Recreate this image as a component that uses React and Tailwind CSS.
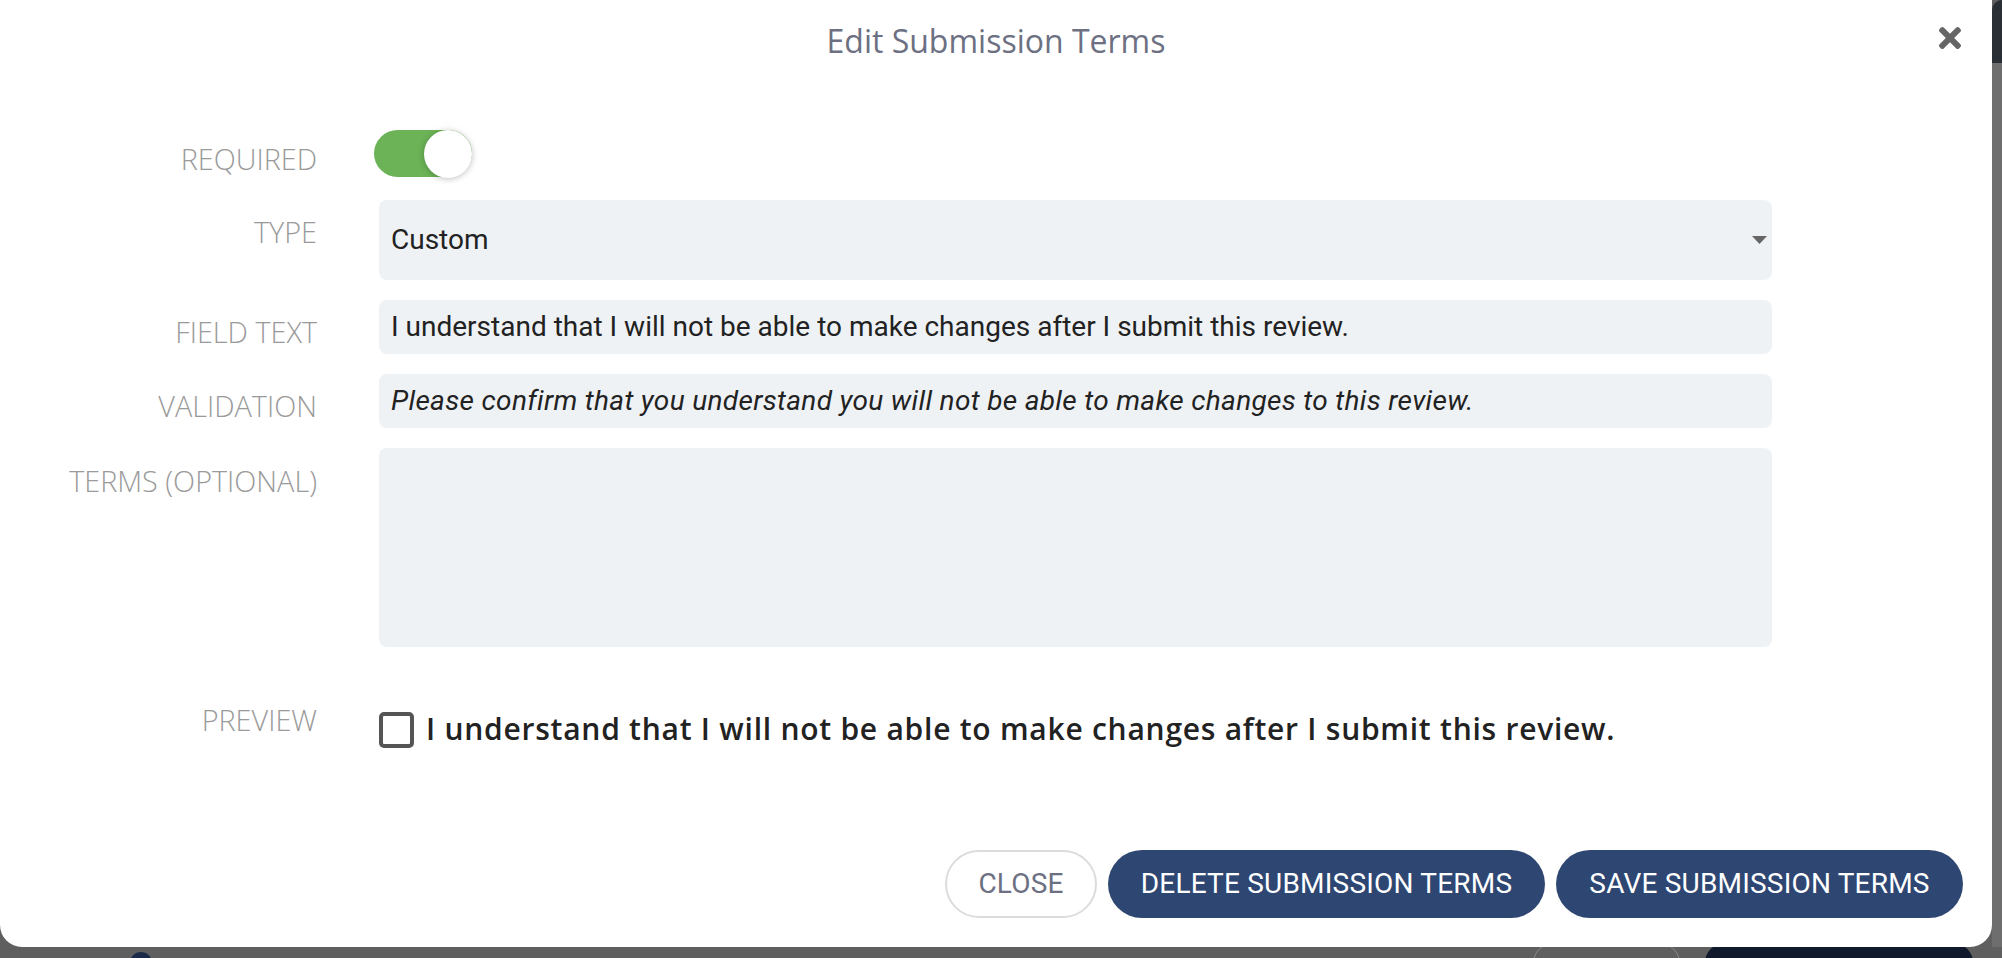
import { FaTimes } from "react-icons/fa";

const labelCls =
  "w-[317px] shrink-0 text-right font-['Open_Sans',sans-serif] font-light text-[28.8px] leading-none text-[#9a9a9a] uppercase";

const Row = ({ label, labelPad = "pt-[18px]", className = "", children }) => (
  <div className={`flex gap-[62px] ${className}`}>
    <div className={`${labelCls} ${labelPad}`}>{label}</div>
    <div className="w-[1393px]">{children}</div>
  </div>
);

const Toggle = () => (
  <div className="ml-[-5px] flex h-[47px] w-[98px] items-center justify-end rounded-full bg-[#6bb356]">
    <div className="h-[48px] w-[48px] rounded-full bg-white shadow-[0_1px_6px_rgba(0,0,0,0.25)]" />
  </div>
);

const Field = ({ children, italic }) => (
  <div
    className={`flex h-[54px] items-center rounded-[8px] bg-[#eff2f5] px-[12px] font-['Roboto',sans-serif] text-[28px] text-[#222] ${
      italic ? "italic tracking-[0.33px]" : ""
    }`}
  >
    {children}
  </div>
);

export default function App() {
  return (
    <div className="flex h-[958px] w-[2002px] flex-col overflow-hidden bg-[#5f5f5f]">
      <div className="flex">
        <div className="relative z-10 flex h-[947px] w-[1992px] shrink-0 flex-col rounded-b-[22px] bg-white">
          {/* header */}
          <div className="flex h-[130px] items-start pl-[58px]">
            <div className="w-[1876px] pt-[25px] text-center font-['Open_Sans',sans-serif] text-[32px] leading-none text-[#6c7082]">
              Edit Submission Terms
            </div>
            <button className="mt-[22px] text-[#666]">
              <FaTimes size={32} />
            </button>
          </div>

          {/* form */}
          <Row label="Required" labelPad="pt-[15px]">
            <Toggle />
          </Row>

          <Row label="Type" className="mt-[23px]">
            <div className="flex h-[80px] items-center justify-between rounded-[8px] bg-[#eff2f5] pl-[12px] pr-[5px] font-['Roboto',sans-serif] text-[28px] text-[#222]">
              <span>Custom</span>
              <svg width="15" height="8" viewBox="0 0 15 8">
                <path d="M0 0h15L7.5 8z" fill="#666" />
              </svg>
            </div>
          </Row>

          <Row label="Field Text" className="mt-[20px]">
            <Field>I understand that I will not be able to make changes after I submit this review.</Field>
          </Row>

          <Row label="Validation" className="mt-[20px]">
            <Field italic>Please confirm that you understand you will not be able to make changes to this review.</Field>
          </Row>

          <Row label="Terms (Optional)" labelPad="pt-[19px]" className="mt-[20px]">
            <div className="h-[199px] rounded-[8px] bg-[#eff2f5]" />
          </Row>

          <Row label="Preview" labelPad="-mt-[6px]" className="mt-[65px]">
            <div className="flex items-center gap-[12px]">
              <div className="h-[36px] w-[35px] shrink-0 rounded-[5px] border-[4px] border-[#555]" />
              <span className="-mt-[3px] font-['Open_Sans',sans-serif] text-[30px] font-semibold leading-none tracking-[0.75px] text-[#222]">
                I understand that I will not be able to make changes after I submit this review.
              </span>
            </div>
          </Row>

          {/* footer */}
          <div className="mt-auto mb-[29px] mr-[29px] flex justify-end gap-[11px] font-['Roboto',sans-serif] text-[28px] tracking-[0.2px]">
            <button className="h-[68px] w-[152px] rounded-full border-2 border-[#dcdcdc] bg-white uppercase text-[#6c7082]">
              Close
            </button>
            <button className="h-[68px] w-[437px] rounded-full bg-[#2e4672] uppercase text-white">
              Delete Submission Terms
            </button>
            <button className="h-[68px] w-[407px] rounded-full bg-[#2e4672] uppercase text-white">
              Save Submission Terms
            </button>
          </div>
        </div>

        {/* backdrop page edge on the right */}
        <div className="flex flex-1 flex-col">
          <div className="h-[63px] rounded-tl-[12px] bg-[#2a2e35]" />
          <div className="flex-1 bg-[#6e6e6e]" />
        </div>
      </div>

      {/* backdrop page below the modal */}
      <div className="flex h-[11px] items-start">
        <div className="ml-[130px] mt-[5px] h-[22px] w-[22px] rounded-full bg-[#1c2a4a]" />
        <div className="ml-[1381px] mt-[-4px] h-[40px] w-[147px] rounded-full border border-[#8a8a8a]" />
        <div className="ml-[25px] mt-[-4px] h-[40px] w-[268px] rounded-full bg-[#111a2c]" />
      </div>
    </div>
  );
}
